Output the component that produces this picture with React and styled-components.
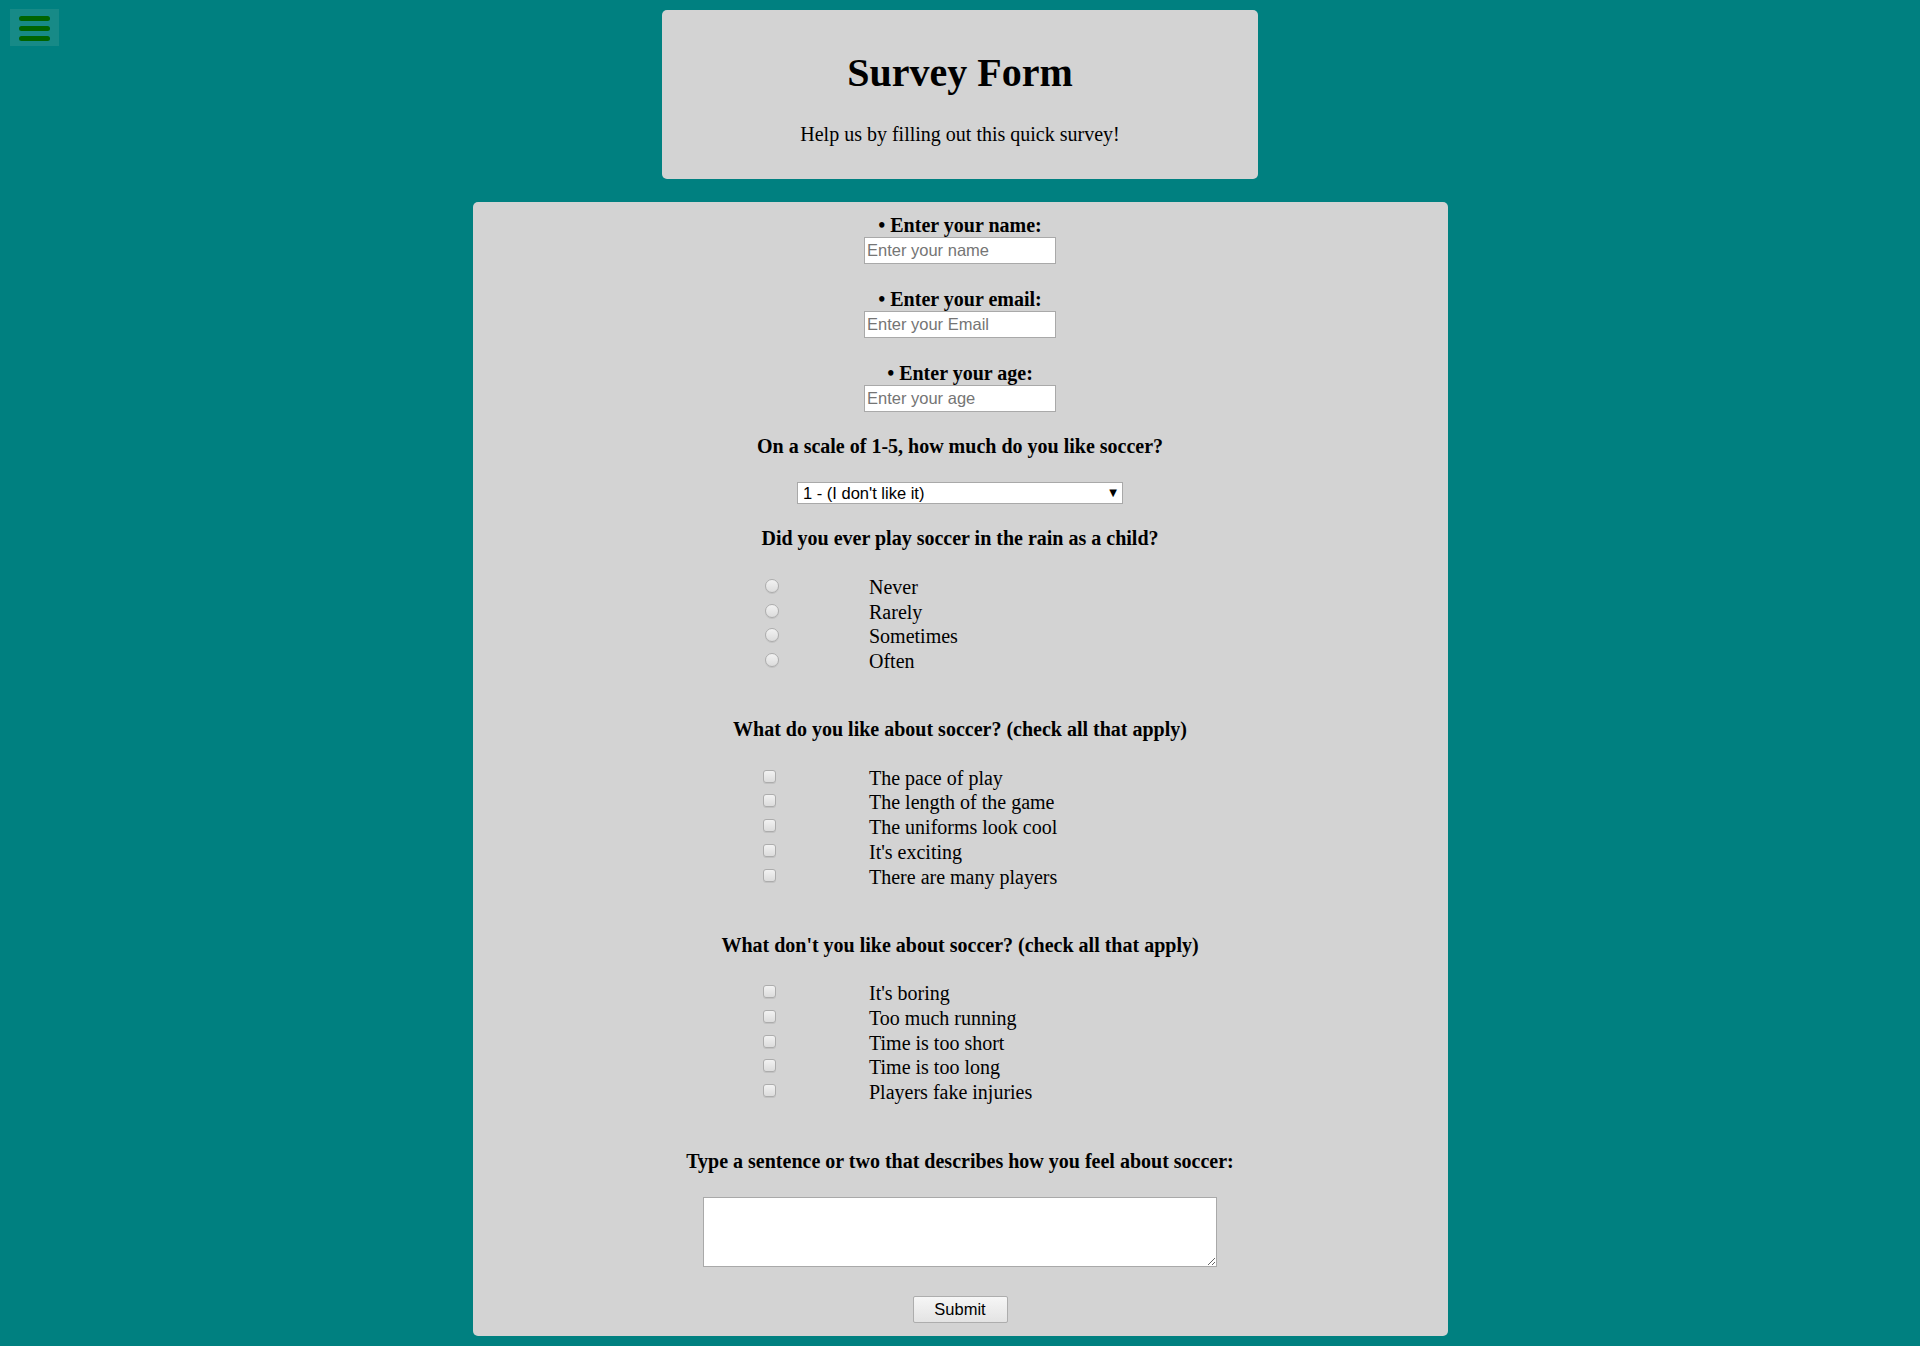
import React from "react";
import styled, { createGlobalStyle } from "styled-components";

const Global = createGlobalStyle`
  html, body {
    margin: 0;
    padding: 0;
    background: #008080;
  }
  body {
    font-family: "Liberation Serif", "Times New Roman", serif;
    color: #000;
  }
  * { box-sizing: border-box; }
`;

const Page = styled.div`
  display: flex;
  flex-direction: column;
  align-items: center;
  padding: 10px 0 9px;
`;

const MenuButton = styled.button`
  position: fixed;
  left: 10px;
  top: 9px;
  width: 49px;
  height: 37px;
  padding: 7px 9px 0;
  border: none;
  background: #178a87;
  display: flex;
  flex-direction: column;
  gap: 5px;
  cursor: pointer;
`;

const MenuBar = styled.span`
  display: block;
  width: 31px;
  height: 5px;
  border-radius: 3px;
  background: #006400;
`;

const Header = styled.header`
  width: 596px;
  background: #d3d3d3;
  border-radius: 5px;
  padding: 40px 0 33px;
  text-align: center;
`;

const Title = styled.h1`
  margin: 0;
  font-size: 40px;
  line-height: 46px;
  font-weight: bold;
`;

const Subtitle = styled.p`
  margin: 27px 0 0;
  font-size: 20px;
  line-height: 23px;
`;

const Card = styled.form`
  width: 975px;
  margin-top: 23px;
  background: #d3d3d3;
  border-radius: 5px;
  padding: 11px 0 13px;
  display: flex;
  flex-direction: column;
  align-items: center;
`;

const FieldLabel = styled.label`
  display: block;
  font-size: 20px;
  line-height: 24px;
  font-weight: bold;
  text-align: center;
`;

const TextInput = styled.input`
  width: 192px;
  height: 27px;
  margin: 0 0 ${(p) => p.$gap}px;
  padding: 1px 2px;
  border: 1px solid #a9a9a9;
  background: #fff;
  font-family: "Liberation Sans", Arial, sans-serif;
  font-size: 16.5px;
  color: #000;
  outline: none;
  &::placeholder { color: #757575; }
`;

const Question = styled.p`
  margin: 0 0 ${(p) => p.$gap}px;
  font-size: 20px;
  line-height: 24px;
  font-weight: bold;
  text-align: center;
`;

const SelectWrap = styled.div`
  position: relative;
  width: 326px;
  height: 22px;
  margin-bottom: 22px;
`;

const Select = styled.select`
  appearance: none;
  -webkit-appearance: none;
  width: 100%;
  height: 100%;
  margin: 0;
  padding: 0 0 0 5px;
  border: 1px solid #a9a9a9;
  border-radius: 0;
  background: #fff;
  font-family: "Liberation Sans", Arial, sans-serif;
  font-size: 16.5px;
  line-height: 20px;
  color: #000;
  outline: none;
`;

const Arrow = styled.span`
  position: absolute;
  right: 6px;
  top: 5px;
  font-family: "DejaVu Sans", sans-serif;
  font-size: 10px;
  line-height: 12px;
  color: #000;
  pointer-events: none;
`;

const Options = styled.div`
  width: 394px;
  margin-bottom: ${(p) => p.$gap}px;
  display: grid;
  grid-template-columns: 107px 1fr;
  grid-auto-rows: 24.7px;
`;

const OptionRow = styled.label`
  display: contents;
  font-size: 20px;
`;

const OptionText = styled.span`
  font-size: 20px;
  line-height: 24.7px;
  white-space: nowrap;
  margin-left: -1px;
`;

const Radio = styled.input.attrs({ type: "radio" })`
  appearance: none;
  -webkit-appearance: none;
  width: 14px;
  height: 14px;
  margin: 4px 0 0 2px;
  border-radius: 50%;
  border: 1px solid #adadad;
  background: linear-gradient(#f2f2f2, #dcdcdc);
  box-shadow: 0 1px 0 rgba(0, 0, 0, 0.08);
`;

const Check = styled.input.attrs({ type: "checkbox" })`
  appearance: none;
  -webkit-appearance: none;
  width: 13px;
  height: 13px;
  margin: 4px 0 0 0;
  border-radius: 3px;
  border: 1px solid #adadad;
  background: linear-gradient(#f2f2f2, #dcdcdc);
  box-shadow: 0 1px 0 rgba(0, 0, 0, 0.08);
`;

const TextArea = styled.textarea`
  width: 514px;
  height: 70px;
  margin: 0 0 29px;
  border: 1px solid #a9a9a9;
  border-radius: 0;
  background: #fff;
  font-family: "Liberation Mono", monospace;
  font-size: 13px;
  outline: none;
`;

const Submit = styled.button`
  width: 95px;
  height: 27px;
  padding: 0;
  border: 1px solid #adadad;
  border-radius: 2px;
  background: linear-gradient(#f6f6f6, #e3e3e3);
  font-family: "Liberation Sans", Arial, sans-serif;
  font-size: 16.5px;
  color: #000;
  cursor: pointer;
`;

const radios = ["Never", "Rarely", "Sometimes", "Often"];
const likes = [
  "The pace of play",
  "The length of the game",
  "The uniforms look cool",
  "It's exciting",
  "There are many players",
];
const dislikes = [
  "It's boring",
  "Too much running",
  "Time is too short",
  "Time is too long",
  "Players fake injuries",
];

const fields = [
  { id: "name", label: "• Enter your name:", ph: "Enter your name", gap: 23 },
  { id: "email", label: "• Enter your email:", ph: "Enter your Email", gap: 23 },
  { id: "age", label: "• Enter your age:", ph: "Enter your age", gap: 22 },
];

export default function App() {
  return (
    <>
      <Global />
      <MenuButton type="button" aria-label="menu">
        <MenuBar />
        <MenuBar />
        <MenuBar />
      </MenuButton>
      <Page>
        <Header>
          <Title>Survey Form</Title>
          <Subtitle>Help us by filling out this quick survey!</Subtitle>
        </Header>
        <Card onSubmit={(e) => e.preventDefault()}>
          {fields.map((f) => (
            <React.Fragment key={f.id}>
              <FieldLabel htmlFor={f.id}>{f.label}</FieldLabel>
              <TextInput id={f.id} placeholder={f.ph} $gap={f.gap} />
            </React.Fragment>
          ))}
          <Question $gap={24}>On a scale of 1-5, how much do you like soccer?</Question>
          <SelectWrap>
            <Select defaultValue="1">
              <option value="1">1 - (I don't like it)</option>
              <option value="2">2</option>
              <option value="3">3</option>
              <option value="4">4</option>
              <option value="5">5 - (I love it)</option>
            </Select>
            <Arrow>▼</Arrow>
          </SelectWrap>
          <Question $gap={25}>Did you ever play soccer in the rain as a child?</Question>
          <Options $gap={43}>
            {radios.map((r) => (
              <OptionRow key={r}>
                <Radio name="rain" value={r} />
                <OptionText>{r}</OptionText>
              </OptionRow>
            ))}
          </Options>
          <Question $gap={25}>What do you like about soccer? (check all that apply)</Question>
          <Options $gap={43.5}>
            {likes.map((r) => (
              <OptionRow key={r}>
                <Check value={r} />
                <OptionText>{r}</OptionText>
              </OptionRow>
            ))}
          </Options>
          <Question $gap={24.5}>What don't you like about soccer? (check all that apply)</Question>
          <Options $gap={44}>
            {dislikes.map((r) => (
              <OptionRow key={r}>
                <Check value={r} />
                <OptionText>{r}</OptionText>
              </OptionRow>
            ))}
          </Options>
          <Question $gap={24}>Type a sentence or two that describes how you feel about soccer:</Question>
          <TextArea />
          <Submit type="submit">Submit</Submit>
        </Card>
      </Page>
    </>
  );
}
